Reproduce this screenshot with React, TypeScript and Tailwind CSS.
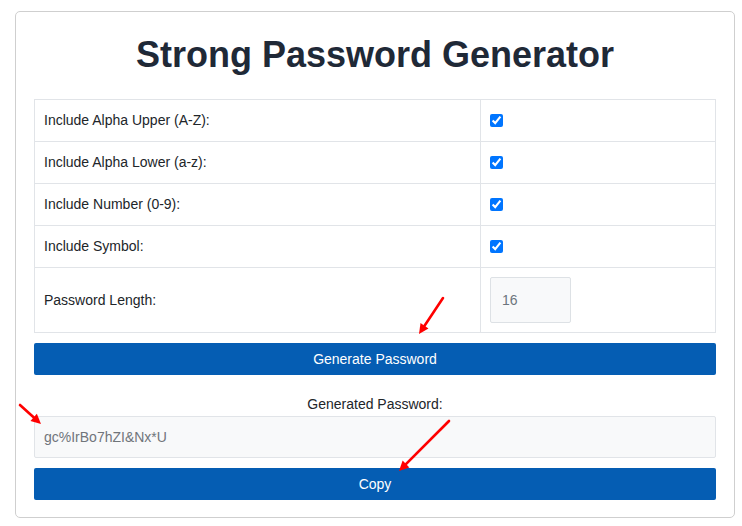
import React from "react";

const OPTIONS = [
  "Include Alpha Upper (A-Z):",
  "Include Alpha Lower (a-z):",
  "Include Number (0-9):",
  "Include Symbol:",
];

function Arrow({ x1, y1, x2, y2 }: { x1: number; y1: number; x2: number; y2: number }) {
  const a = Math.atan2(y2 - y1, x2 - x1);
  const len = 11;
  const spread = 0.45;
  const p1 = [x2 - len * Math.cos(a - spread), y2 - len * Math.sin(a - spread)];
  const p2 = [x2 - len * Math.cos(a + spread), y2 - len * Math.sin(a + spread)];
  const bx = x2 - 7 * Math.cos(a);
  const by = y2 - 7 * Math.sin(a);
  return (
    <g>
      <line x1={x1} y1={y1} x2={bx} y2={by} stroke="#ff0000" strokeWidth={2.6} strokeLinecap="round" />
      <polygon points={`${x2},${y2} ${p1[0]},${p1[1]} ${p2[0]},${p2[1]}`} fill="#ff0000" />
    </g>
  );
}

export default function App() {
  return (
    <div
      className="relative w-[742px] h-[526px] bg-white pt-[11px] px-[15px]"
      style={{ fontFamily: '"Liberation Sans", Arial, sans-serif' }}
    >
      <div className="w-[720px] border border-[#cfcfcf] rounded-[5px] px-[18px] pt-[21px] pb-[17px]">
        <h1 className="text-center text-[36px] leading-[43px] font-bold text-[#1f2937] mb-[23px]">
          Strong Password Generator
        </h1>

        <table className="w-full border-collapse text-[14px] text-[#212529]">
          <tbody>
            {OPTIONS.map((label) => (
              <tr key={label} className="h-[42px]">
                <td className="w-[446px] border border-[#e1e4e8] pl-[9px] align-middle">{label}</td>
                <td className="border border-[#e1e4e8] pl-[9px] align-middle">
                  <input type="checkbox" defaultChecked className="block w-[13px] h-[13px] m-0 -mt-[1px] accent-[#0075ff]" />
                </td>
              </tr>
            ))}
            <tr className="h-[65px]">
              <td className="border border-[#e1e4e8] pl-[9px] align-middle">Password Length:</td>
              <td className="border border-[#e1e4e8] pl-[9px] align-middle">
                <input
                  type="number"
                  defaultValue={16}
                  className="block w-[81px] h-[46px] bg-[#f8f9fa] border border-[#dde1e5] rounded-[2px] pl-[11px] text-[14px] text-[#6c757d] outline-none [appearance:textfield]"
                />
              </td>
            </tr>
          </tbody>
        </table>

        <button className="mt-[10px] w-full h-[32px] bg-[#055db3] text-white text-[14px] rounded-[2px]">
          Generate Password
        </button>

        <p className="mt-[21px] text-center text-[14px] leading-[16px] text-[#212529]">Generated Password:</p>

        <div className="mt-[4px] h-[42px] bg-[#f8f9fa] border border-[#e1e4e8] rounded-[2px] flex items-center pl-[9px] text-[14px] text-[#70757a]">
          gc%IrBo7hZI&amp;Nx*U
        </div>

        <button className="mt-[10px] w-full h-[32px] bg-[#055db3] text-white text-[14px] rounded-[2px]">
          Copy
        </button>
      </div>

      <svg className="absolute inset-0 pointer-events-none" width="742" height="526">
        <Arrow x1={443} y1={298} x2={419} y2={334} />
        <Arrow x1={20} y1={405} x2={41} y2={424} />
        <Arrow x1={449} y1={421} x2={399} y2={471} />
      </svg>
    </div>
  );
}
